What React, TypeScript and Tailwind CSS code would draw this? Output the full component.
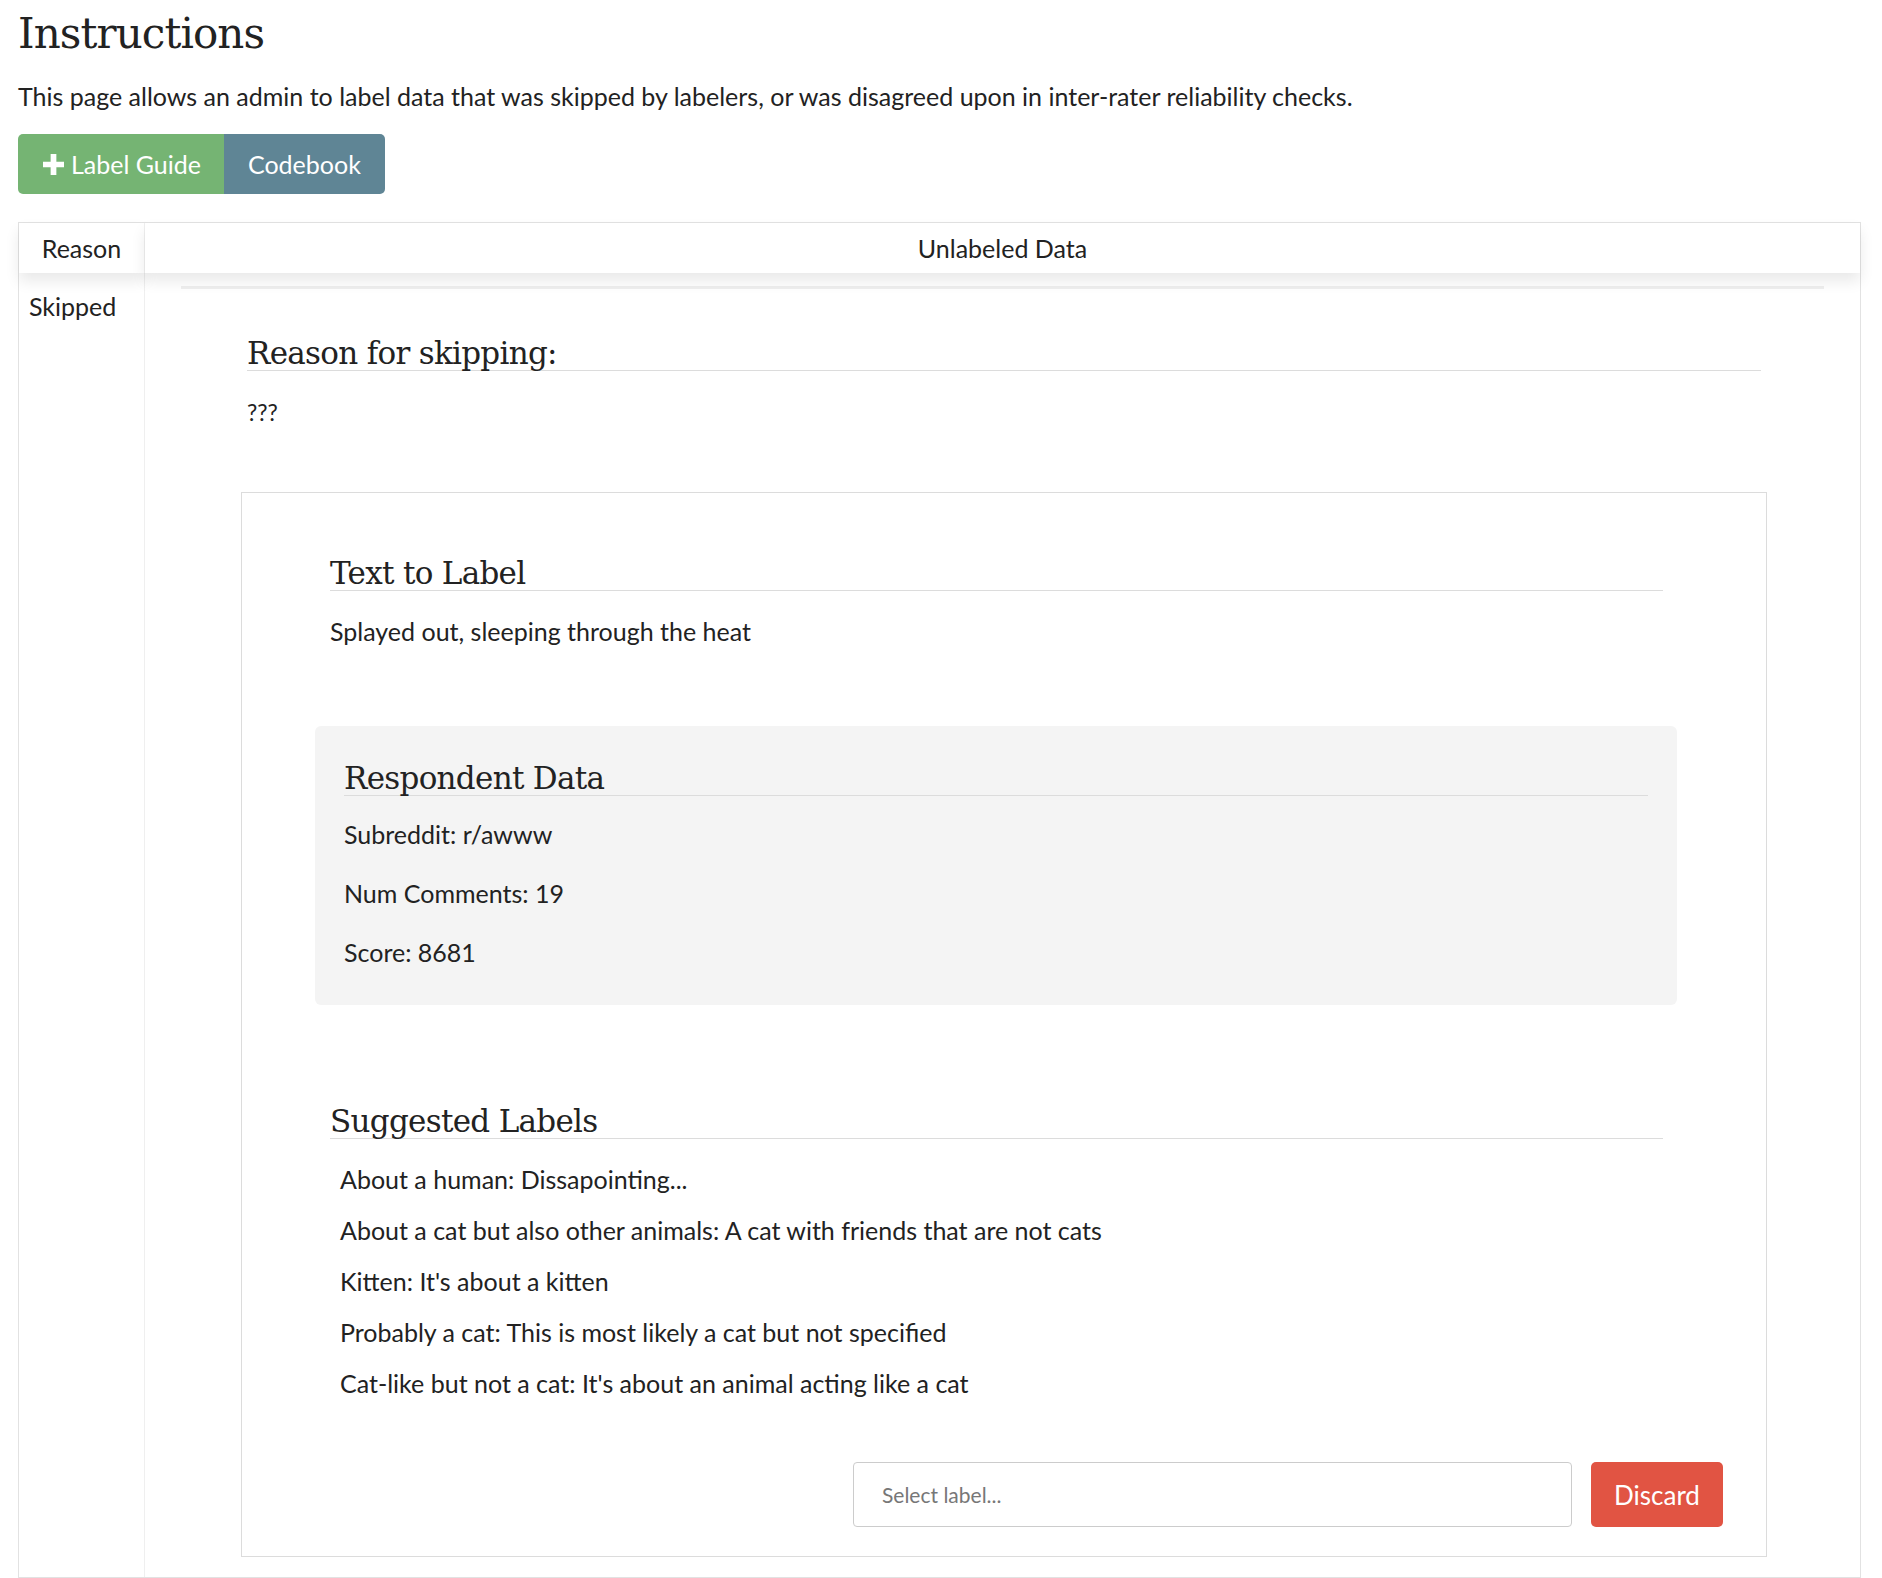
import React from "react";

const slab = { fontFamily: '"DejaVu Serif", "Liberation Serif", serif' };

const SUGGESTED = [
  "About a human: Dissapointing...",
  "About a cat but also other animals: A cat with friends that are not cats",
  "Kitten: It's about a kitten",
  "Probably a cat: This is most likely a cat but not specified",
  "Cat-like but not a cat: It's about an animal acting like a cat",
];

function SectionTitle({ children }: { children: React.ReactNode }) {
  return (
    <h3
      style={slab}
      className="border-b border-[#dcdcdc] text-[31px] leading-[34px] tracking-[-0.7px] text-[#222]"
    >
      {children}
    </h3>
  );
}

export default function App() {
  return (
    <div
      className="min-h-[1578px] bg-white pl-[18px] pr-[21px] text-[25px] leading-[30px] text-[#222]"
      style={{ fontFamily: "Lato, sans-serif" }}
    >
      <h1 style={slab} className="pt-[10px] text-[42px] leading-[48px] tracking-[-0.9px] text-[#222]">
        Instructions
      </h1>
      <p className="mt-[23px]">
        This page allows an admin to label data that was skipped by labelers, or was disagreed upon in inter-rater
        reliability checks.
      </p>

      <div className="mt-[23px] flex h-[60px] w-fit overflow-hidden rounded-[5px] text-white">
        <button className="flex items-center gap-[7px] bg-[#75b473] pl-[25px] pr-[23px]">
          <svg width="21" height="21" viewBox="0 0 22 22">
            <path d="M8 0h6v8h8v6h-8v8H8v-8H0V8h8z" fill="white" />
          </svg>
          Label Guide
        </button>
        <button className="bg-[#5f8595] px-[24px]">Codebook</button>
      </div>

      <div className="mt-[28px] grid grid-cols-[126px_1fr] border border-[#e2e2e2]">
        <div className="relative z-10 flex h-[50px] items-center justify-center border-r border-[#efefef] bg-white shadow-[0_8px_14px_rgba(0,0,0,0.09)]">
          Reason
        </div>
        <div className="relative z-10 flex h-[50px] items-center justify-center bg-white shadow-[0_8px_14px_rgba(0,0,0,0.09)]">
          Unlabeled Data
        </div>

        <div className="border-r border-[#efefef] px-[10px] pt-[18px]">Skipped</div>
        <div className="pb-[20px]">
          <div className="mx-[36px] mt-[13px] h-[3px] bg-[#efefef]" />

          <div className="ml-[102px] mr-[99px] mt-[47px]">
            <SectionTitle>Reason for skipping:</SectionTitle>
            <p className="mt-[27px] text-[23px] leading-[28px]">???</p>
          </div>

          <div className="ml-[96px] mr-[93px] mt-[66px] border border-[#dcdcdc] pb-[29px] pt-[63px]">
            <div className="ml-[88px] mr-[103px]">
              <SectionTitle>Text to Label</SectionTitle>
              <p className="mt-[25px]">Splayed out, sleeping through the heat</p>
            </div>

            <div className="ml-[73px] mr-[89px] mt-[80px] rounded-[6px] bg-[#f4f4f4] px-[29px] pb-[38px] pt-[35px]">
              <SectionTitle>Respondent Data</SectionTitle>
              <div className="mt-[23px] flex flex-col gap-[29px]">
                <p>Subreddit: r/awww</p>
                <p>Num Comments: 19</p>
                <p>Score: 8681</p>
              </div>
            </div>

            <div className="ml-[88px] mr-[103px] mt-[99px]">
              <SectionTitle>Suggested Labels</SectionTitle>
              <div className="ml-[10px] mt-[25px] flex flex-col gap-[21px]">
                {SUGGESTED.map((s) => (
                  <p key={s}>{s}</p>
                ))}
              </div>
            </div>

            <div className="mr-[43px] mt-[64px] flex justify-end gap-[19px]">
              <div className="flex h-[65px] w-[719px] items-center rounded-[4px] border border-[#cccccc] px-[28px] text-[21px] text-[#777]">
                Select label...
              </div>
              <button className="h-[65px] w-[132px] rounded-[5px] bg-[#e15443] text-[26px] text-white">Discard</button>
            </div>
          </div>
        </div>
      </div>
    </div>
  );
}
